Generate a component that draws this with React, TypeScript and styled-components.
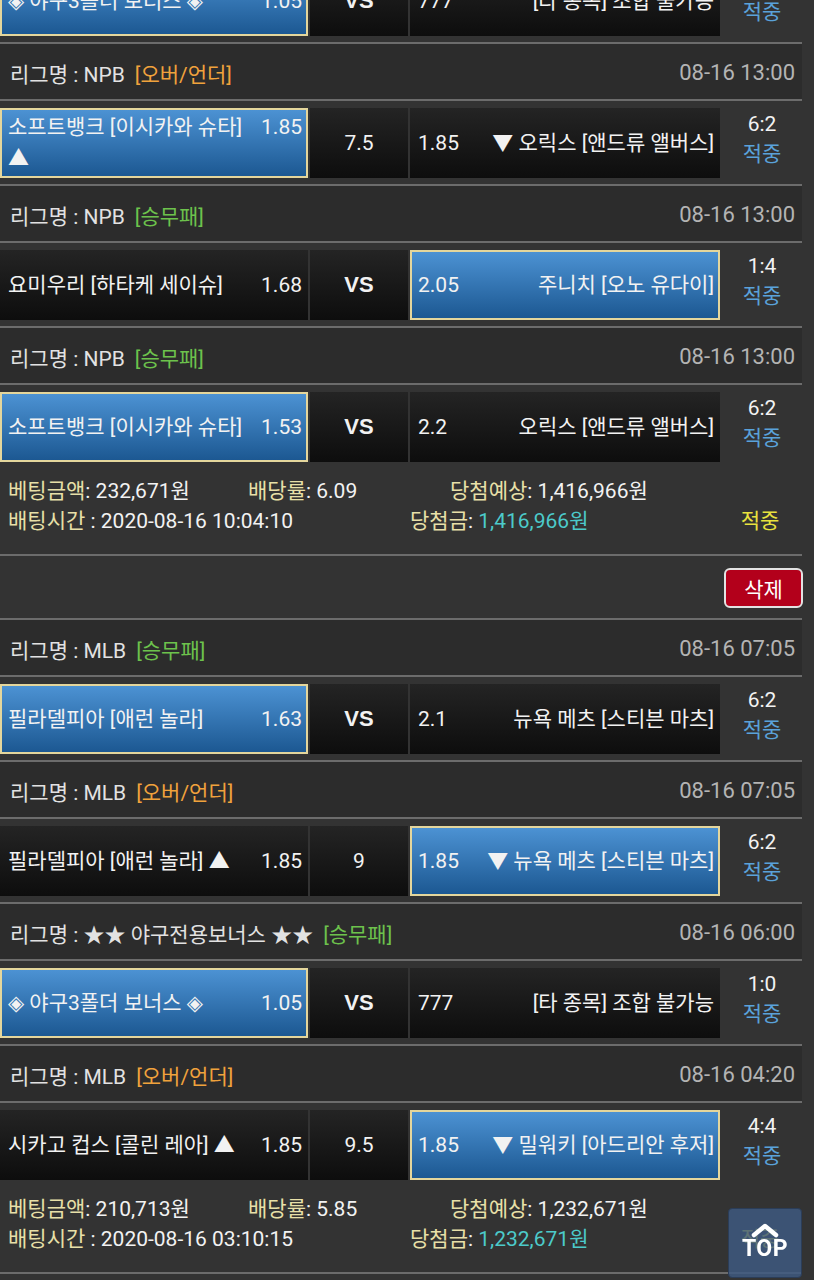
import styled, { createGlobalStyle, css } from 'styled-components';

const GlobalStyle = createGlobalStyle`
    html, body {
        margin: 0;
        padding: 0;
        background: #333333;
    }
    body {
        font-family: Roboto, "Noto Sans CJK KR", "DejaVu Sans", sans-serif;
        color: #eeeeee;
        overflow: hidden;
    }
`

type BetType = '승무패' | '오버/언더'

interface Match {
    league?: string;
    type?: BetType;
    time?: string;
    home: string;
    homeOdds: string;
    mid: string;
    away: string;
    awayOdds: string;
    score: string;
    pick: 'home' | 'away';
}

interface Ticket {
    matches: Match[];
    amount: string;
    rate: string;
    expect: string;
    betTime: string;
    won: string;
}

const bonus: Omit<Match, 'league' | 'type' | 'time'> = {
    home: '◈ 야구3폴더 보너스 ◈',
    homeOdds: '1.05',
    mid: 'VS',
    away: '[타 종목] 조합 불가능',
    awayOdds: '777',
    score: '1:0',
    pick: 'home',
}

const tickets: Ticket[] = [
    {
        matches: [
            bonus,
            {league: 'NPB', type: '오버/언더', time: '08-16 13:00', home: '소프트뱅크 [이시카와 슈타]\n▲', homeOdds: '1.85', mid: '7.5', away: '▼ 오릭스 [앤드류 앨버스]', awayOdds: '1.85', score: '6:2', pick: 'home'},
            {league: 'NPB', type: '승무패', time: '08-16 13:00', home: '요미우리 [하타케 세이슈]', homeOdds: '1.68', mid: 'VS', away: '주니치 [오노 유다이]', awayOdds: '2.05', score: '1:4', pick: 'away'},
            {league: 'NPB', type: '승무패', time: '08-16 13:00', home: '소프트뱅크 [이시카와 슈타]', homeOdds: '1.53', mid: 'VS', away: '오릭스 [앤드류 앨버스]', awayOdds: '2.2', score: '6:2', pick: 'home'},
        ],
        amount: '232,671원',
        rate: '6.09',
        expect: '1,416,966원',
        betTime: '2020-08-16 10:04:10',
        won: '1,416,966원',
    },
    {
        matches: [
            {league: 'MLB', type: '승무패', time: '08-16 07:05', home: '필라델피아 [애런 놀라]', homeOdds: '1.63', mid: 'VS', away: '뉴욕 메츠 [스티븐 마츠]', awayOdds: '2.1', score: '6:2', pick: 'home'},
            {league: 'MLB', type: '오버/언더', time: '08-16 07:05', home: '필라델피아 [애런 놀라] ▲', homeOdds: '1.85', mid: '9', away: '▼ 뉴욕 메츠 [스티븐 마츠]', awayOdds: '1.85', score: '6:2', pick: 'away'},
            {league: '★★ 야구전용보너스 ★★', type: '승무패', time: '08-16 06:00', ...bonus},
            {league: 'MLB', type: '오버/언더', time: '08-16 04:20', home: '시카고 컵스 [콜린 레아] ▲', homeOdds: '1.85', mid: '9.5', away: '▼ 밀워키 [아드리안 후저]', awayOdds: '1.85', score: '4:4', pick: 'away'},
        ],
        amount: '210,713원',
        rate: '5.85',
        expect: '1,232,671원',
        betTime: '2020-08-16 03:10:15',
        won: '1,232,671원',
    },
]

const Board = styled.div`
    width: 802px;
    margin-top: -41px;
    font-size: 21px;
`

const LeagueHeader = styled.div`
    height: 55px;
    box-sizing: content-box;
    border-top: 2px solid #6c6c6c;
    border-bottom: 2px solid #6c6c6c;
    background: #2c2c2c;
    display: flex;
    align-items: center;
    justify-content: space-between;
    padding: 2px 7px 0 10px;
    height: 53px;
`

const LeagueName = styled.span`
    color: #e2e2e2;
`

const TypeTag = styled.span<{ $type: BetType }>`
    margin-left: 10px;
    color: ${p => p.$type === '승무패' ? '#6dc24c' : '#f0a23c'};
`

const TimeText = styled.span`
    color: #b4b4b4;
    font-size: 22px;
`

const MatchRow = styled.div`
    display: flex;
    gap: 2px;
    height: 70px;
    margin: 7px 0 6px;
`

const Cell = styled.div<{ $picked?: boolean; $w: number }>`
    width: ${p => p.$w}px;
    flex: none;
    box-sizing: border-box;
    display: flex;
    align-items: center;
    padding: 0 6px 0 8px;
    color: #f2f2f2;
    background: linear-gradient(#242424, #0d0d0d);
    ${p => p.$picked && css`
        padding: 0 4px 0 6px;
        border: 2px solid #e4d69c;
        background: linear-gradient(#4c92d3, #1c5892);
    `}
`

const CellBody = styled.div`
    width: 100%;
    line-height: 31px;
`

const OddsRight = styled.span`
    float: right;
    margin-left: 6px;
`

const OddsLeft = styled.span`
    float: left;
    margin-right: 6px;
`

const TeamName = styled.div<{ $right?: boolean }>`
    white-space: pre;
    text-align: ${p => p.$right ? 'right' : 'left'};
`

const MidCell = styled(Cell)<{ $vs: boolean }>`
    justify-content: center;
    padding: 0;
    font-size: ${p => p.$vs ? 22 : 21}px;
    font-weight: ${p => p.$vs ? 700 : 400};
    font-family: ${p => p.$vs ? '"Liberation Sans", Arial, sans-serif' : 'inherit'};
`

const ScoreCell = styled.div`
    width: 80px;
    flex: none;
    display: flex;
    flex-direction: column;
    align-items: center;
    justify-content: center;
    padding-bottom: 9px;
    box-sizing: border-box;
    line-height: 30px;
    color: #f2f2f2;
`

const Hit = styled.span<{ $yellow?: boolean }>`
    color: ${p => p.$yellow ? '#e8e23e' : '#5aa2da'};
`

const Summary = styled.div`
    padding: 8px 0 18px;
    border-bottom: 2px solid #6c6c6c;
    line-height: 30px;
`

const SummaryRow = styled.div<{ $cols: string }>`
    display: grid;
    grid-template-columns: ${p => p.$cols};
    padding: 0 2px 0 8px;
    white-space: nowrap;
`

const Label = styled.span`
    color: #e8e0a8;
`

const Value = styled.span<{ $cyan?: boolean }>`
    color: ${p => p.$cyan ? '#4ccaca' : '#f2f2f2'};
`

const Centered = styled.span`
    text-align: center;
`

const DeleteBar = styled.div`
    height: 62px;
    display: flex;
    align-items: center;
    justify-content: flex-end;
    margin-right: -1px;
`

const DeleteButton = styled.button`
    width: 79px;
    height: 40px;
    margin-top: 1px;
    border: 2px solid #e2e2e2;
    border-radius: 6px;
    background: #b3001b;
    color: #ffffff;
    font-family: Roboto, "Noto Sans CJK KR", sans-serif;
    font-size: 21px;
    padding: 0;
`

const TopButton = styled.div`
    position: fixed;
    right: 12px;
    bottom: 2px;
    width: 74px;
    height: 70px;
    box-sizing: border-box;
    border: 1px solid #2b3d58;
    border-radius: 4px;
    background: rgba(62, 90, 130, 0.82);
    display: flex;
    flex-direction: column;
    align-items: center;
    justify-content: center;
    padding-bottom: 4px;
    color: #ffffff;
`

const TopLabel = styled.span`
    font-family: Roboto, "Liberation Sans", sans-serif;
    font-weight: 700;
    font-size: 23px;
    line-height: 22px;
    letter-spacing: 0.5px;
`

function MatchBlock({m}: { m: Match }) {
    const vs = m.mid === 'VS'
    return (
        <>
            {m.league && (
                <LeagueHeader>
                    <LeagueName>
                        리그명 : {m.league}
                        <TypeTag $type={m.type!}>[{m.type}]</TypeTag>
                    </LeagueName>
                    <TimeText>{m.time}</TimeText>
                </LeagueHeader>
            )}
            <MatchRow>
                <Cell $w={308} $picked={m.pick === 'home'}>
                    <CellBody>
                        <OddsRight>{m.homeOdds}</OddsRight>
                        <TeamName>{m.home}</TeamName>
                    </CellBody>
                </Cell>
                <MidCell $w={98} $vs={vs}>{m.mid}</MidCell>
                <Cell $w={310} $picked={m.pick === 'away'}>
                    <CellBody>
                        <OddsLeft>{m.awayOdds}</OddsLeft>
                        <TeamName $right>{m.away}</TeamName>
                    </CellBody>
                </Cell>
                <ScoreCell>
                    <span>{m.score}</span>
                    <Hit>적중</Hit>
                </ScoreCell>
            </MatchRow>
        </>
    )
}

function TicketBlock({t}: { t: Ticket }) {
    return (
        <>
            {t.matches.map((m, i) => <MatchBlock key={i} m={m}/>)}
            <Summary>
                <SummaryRow $cols="240px 202px 1fr">
                    <span><Label>베팅금액</Label><Value>: {t.amount}</Value></span>
                    <span><Label>배당률</Label><Value>: {t.rate}</Value></span>
                    <span><Label>당첨예상</Label><Value>: {t.expect}</Value></span>
                </SummaryRow>
                <SummaryRow $cols="402px 1fr 80px">
                    <span><Label>배팅시간</Label><Value> : {t.betTime}</Value></span>
                    <span><Label>당첨금</Label><Value>: </Value><Value $cyan>{t.won}</Value></span>
                    <Centered><Hit $yellow>적중</Hit></Centered>
                </SummaryRow>
            </Summary>
        </>
    )
}

function App() {
    return (
        <>
            <GlobalStyle/>
            <Board>
                <TicketBlock t={tickets[0]}/>
                <DeleteBar>
                    <DeleteButton>삭제</DeleteButton>
                </DeleteBar>
                <TicketBlock t={tickets[1]}/>
            </Board>
            <TopButton>
                <svg width="30" height="16" viewBox="0 0 30 16">
                    <polyline points="4,13 15,4 26,13" fill="none" stroke="#ffffff" strokeWidth="4.5" strokeLinecap="round" strokeLinejoin="round"/>
                </svg>
                <TopLabel>TOP</TopLabel>
            </TopButton>
        </>
    )
}

export default App
